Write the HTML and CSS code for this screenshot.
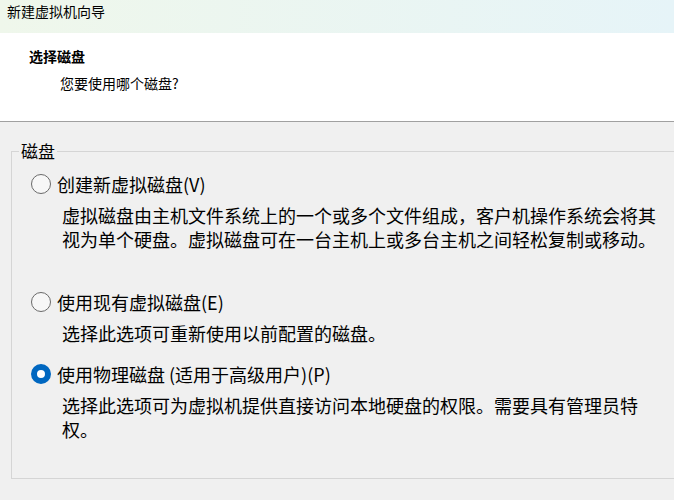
FILE: index.html
```html
<!DOCTYPE html>
<html lang="zh-CN">
<head>
    <meta charset="UTF-8">
    <meta name="viewport" content="width=device-width, initial-scale=1.0">
    <title>新建虚拟机向导</title>
    <link rel="stylesheet" href="styles.css">
</head>
<body>

    <div class="titlebar">新建虚拟机向导</div>

    <div class="header">
        <div class="header-title">选择磁盘</div>
        <div class="header-sub">您要使用哪个磁盘?</div>
    </div>

    <fieldset class="group">
        <legend>磁盘</legend>

        <label class="option">
            <input type="radio" name="disk" class="radio">
            <span>创建新虚拟磁盘(V)</span>
        </label>
        <div class="desc desc-tall">虚拟磁盘由主机文件系统上的一个或多个文件组成，客户机操作系统会将其视为单个硬盘。虚拟磁盘可在一台主机上或多台主机之间轻松复制或移动。</div>

        <label class="option">
            <input type="radio" name="disk" class="radio">
            <span>使用现有虚拟磁盘(E)</span>
        </label>
        <div class="desc">选择此选项可重新使用以前配置的磁盘。</div>

        <label class="option">
            <input type="radio" name="disk" class="radio" checked>
            <span>使用物理磁盘 (适用于高级用户)(P)</span>
        </label>
        <div class="desc">选择此选项可为虚拟机提供直接访问本地硬盘的权限。需要具有管理员特权。</div>
    </fieldset>

</body>
</html>
```

FILE: styles.css
```css
body {
    font-family: "Noto Sans CJK SC", "Liberation Sans", sans-serif;
    margin: 0;
    padding: 0;
    background-color: #f0f0f0;
    color: #000;
    overflow: hidden;
}
.titlebar {
    height: 33px;
    box-sizing: border-box;
    padding: 2px 0 0 7px;
    font-size: 14px;
    line-height: 18px;
    background: linear-gradient(to right, #eff7eb, #e6f4f8);
}
.header {
    height: 89px;
    box-sizing: border-box;
    padding: 13px 0 0 29px;
    background-color: #fff;
    border-bottom: 1px solid #a0a0a0;
}
.header-title {
    font-size: 14px;
    font-weight: bold;
    line-height: 20px;
}
.header-sub {
    font-size: 14px;
    line-height: 20px;
    margin: 7px 0 0 31px;
}
.group {
    margin: 17px 0 0 11px;
    padding: 9px 0 37px 19px;
    border: 1px solid #d5d5d5;
    border-right: none;
    min-width: 0;
}
.group legend {
    font-size: 17px;
    line-height: 24px;
    padding: 0 2px;
    margin-left: -12px;
}
.option {
    display: flex;
    align-items: center;
    gap: 6px;
    font-size: 18px;
    line-height: 24px;
}
.radio {
    appearance: none;
    -webkit-appearance: none;
    width: 20px;
    height: 20px;
    margin: 0;
    box-sizing: border-box;
    border: 1px solid #6a6a6a;
    border-radius: 50%;
    background-color: #f7f7f7;
}
.radio:checked {
    border: 6px solid #0067c0;
    background-color: #fff;
}
.desc {
    font-size: 18px;
    line-height: 24px;
    margin: 7px 0 0 31px;
    width: 600px;
}
.desc-tall {
    height: 87px;
}
.desc + .option {
    margin-top: 17px;
}
.desc-tall + .option {
    margin-top: 0;
}
```
